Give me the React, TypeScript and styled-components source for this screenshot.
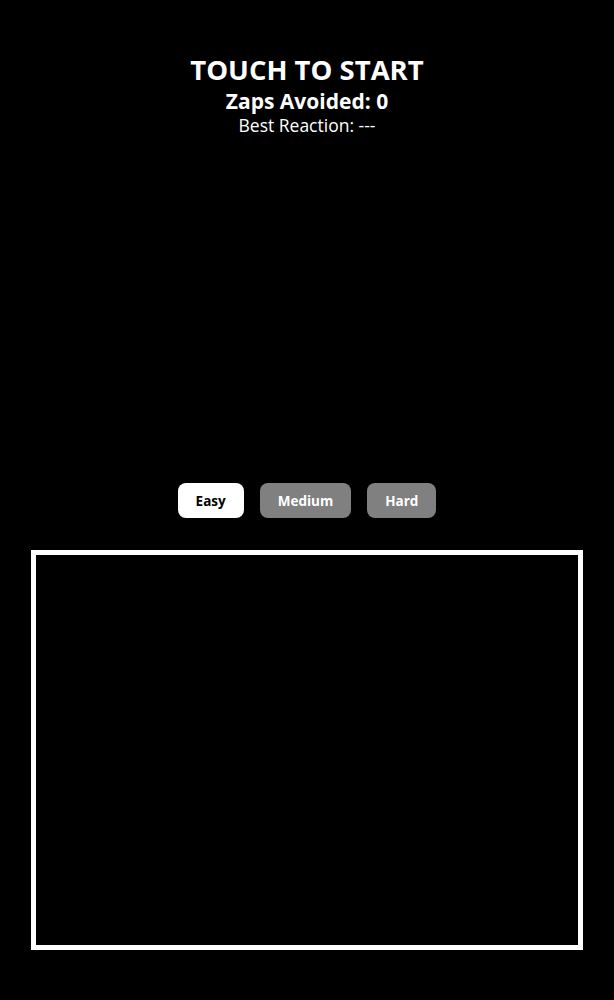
import React, { FC, useState } from 'react';
import styled, { createGlobalStyle } from 'styled-components';

const GlobalStyle = createGlobalStyle`
  html, body {
    margin: 0;
    padding: 0;
    background: #000;
  }
  body {
    font-family: 'Open Sans', 'Noto Sans', sans-serif;
    color: #fff;
  }
`;

const Page = styled.div`
  display: flex;
  flex-direction: column;
  align-items: center;
  width: 614px;
  min-height: 1000px;
  background: #000;
`;

const Header = styled.div`
  display: flex;
  flex-direction: column;
  align-items: center;
  padding-top: 52px;
  height: 483px;
  box-sizing: border-box;
`;

const Title = styled.h1`
  margin: 0;
  font-size: 27.5px;
  font-weight: 700;
  line-height: 36px;
`;

const Score = styled.div`
  font-size: 21px;
  font-weight: 700;
  line-height: 26px;
`;

const Best = styled.div`
  font-size: 17.5px;
  line-height: 22px;
`;

const Levels = styled.div`
  display: flex;
  gap: 16px;
  height: 35px;
`;

const LevelButton = styled.button<{ $active: boolean }>`
  height: 35px;
  padding: 0 18px;
  border: none;
  border-radius: 8px;
  font-family: inherit;
  font-size: 13.5px;
  font-weight: 700;
  background: ${({ $active }) => ($active ? '#fff' : '#808080')};
  color: ${({ $active }) => ($active ? '#000' : '#fff')};
  cursor: pointer;
`;

const Arena = styled.div`
  margin-top: 32px;
  width: 552px;
  height: 400px;
  box-sizing: border-box;
  border: 5px solid #fff;
  background: #000;
`;

const levels = ['Easy', 'Medium', 'Hard'];

const App: FC = () => {
  const [level, setLevel] = useState('Easy');

  return (
    <>
      <GlobalStyle />
      <Page>
        <Header>
          <Title>TOUCH TO START</Title>
          <Score>Zaps Avoided: 0</Score>
          <Best>Best Reaction: ---</Best>
        </Header>
        <Levels>
          {levels.map((l) => (
            <LevelButton key={l} $active={l === level} onClick={() => setLevel(l)}>
              {l}
            </LevelButton>
          ))}
        </Levels>
        <Arena />
      </Page>
    </>
  );
};

export default App;
